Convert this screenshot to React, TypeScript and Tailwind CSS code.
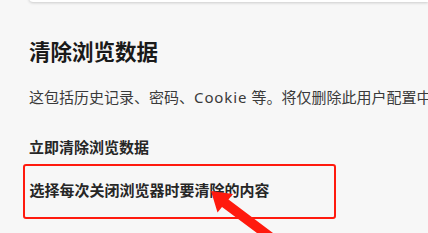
import React from "react";

export default function App() {
  return (
    <div className="relative w-[428px] h-[233px] overflow-hidden bg-[#f7f7f7] text-[#202020] font-['Noto_Sans','Noto_Sans_CJK_SC',sans-serif]">
      <div className="ml-[29px] mt-[-20px] h-[22px] bg-white rounded-bl-[4px] shadow-[0_1px_3px_rgba(0,0,0,0.18)]" />
      <div className="pl-[29px]">
        <h1 className="mt-[35px] h-[30px] leading-[30px] text-[21.5px] font-bold text-[#1a1a1a] whitespace-nowrap">
          清除浏览数据
        </h1>
        <p className="mt-[20px] h-[20px] leading-[20px] text-[15px] text-[#3a3a3a] whitespace-nowrap">
          这包括历史记录、密码、<span className="tracking-[0.9px]">Cookie</span>
          <span className="ml-[4px]">等。将仅删除此用户配置中的数据。</span>
        </p>
        <div className="mt-[29.5px] h-[20px] leading-[20px] text-[15px] font-semibold text-[#262626] whitespace-nowrap">
          立即清除浏览数据
        </div>
      </div>
      <div className="ml-[23px] mt-[7px] w-[313px] h-[55px] border-[2.5px] border-[#ff1a0e] rounded-[3px] pl-[4.5px] pt-[14px]">
        <div className="h-[20px] leading-[20px] text-[15px] font-semibold text-[#262626] whitespace-nowrap">
          选择每次关闭浏览器时要清除的内容
        </div>
      </div>
      <svg
        className="absolute left-0 top-0 pointer-events-none"
        width="428"
        height="233"
        viewBox="0 0 428 233"
      >
        <polygon
          points="211,191 233,194 228.5,199.5 277,236 261,236 222,207 217.5,212.5"
          fill="#ff1a0e"
        />
      </svg>
    </div>
  );
}
